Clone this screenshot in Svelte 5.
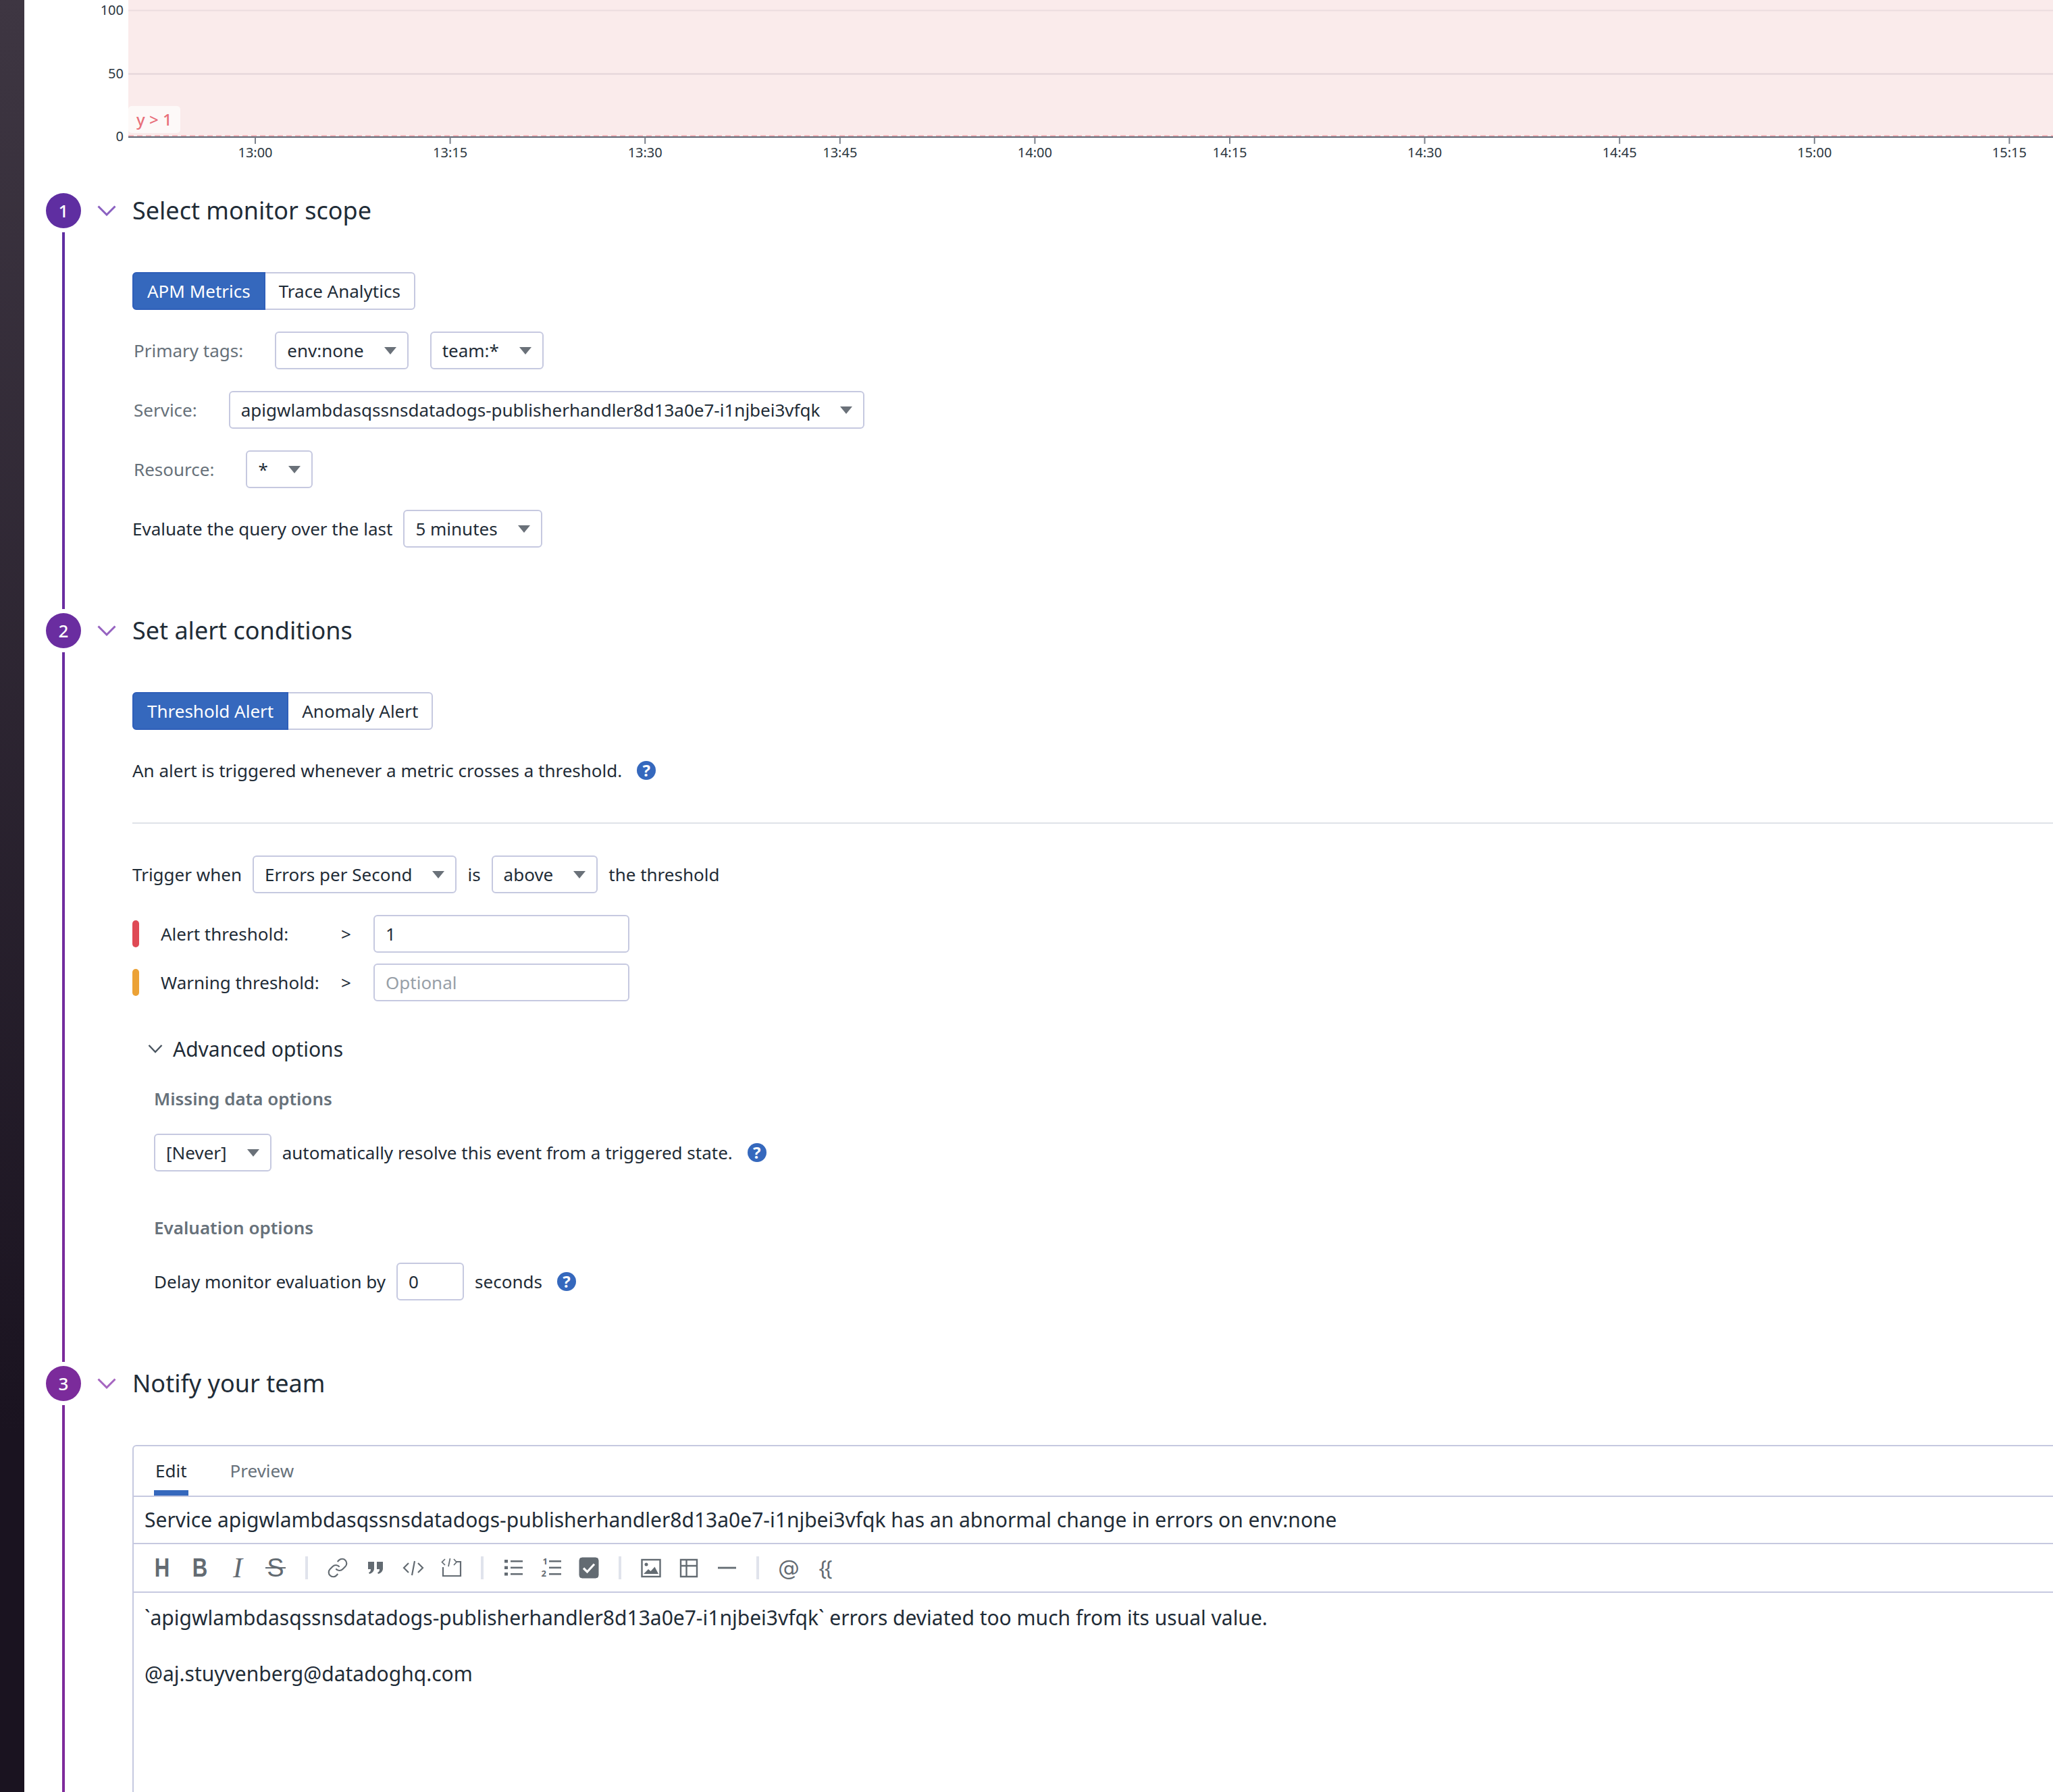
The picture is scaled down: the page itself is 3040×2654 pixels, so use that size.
<script lang="ts">
	const service = 'apigwlambdasqssnsdatadogs-publisherhandler8d13a0e7-i1njbei3vfqk';
	const ticks = ['13:00', '13:15', '13:30', '13:45', '14:00', '14:15', '14:30', '14:45', '15:00', '15:15'];
	const tickX = (i: number) => 342 + i * 288.6;
</script>

{#snippet select(label: string)}
	<div class="select">
		<span>{label}</span>
		<i class="caret"></i>
	</div>
{/snippet}

{#snippet help()}
	<span class="help">?</span>
{/snippet}

{#snippet stepHead(title: string)}
	<header class="step-head">
		<svg class="chevron" width="28" height="16" viewBox="0 0 28 16">
			<path d="M1.5 1.5 14 14 26.5 1.5" fill="none" stroke-width="3" />
		</svg>
		<h2>{title}</h2>
	</header>
{/snippet}

<div class="page">
	<aside class="nav-edge"></aside>

	<main class="content">
		<svg class="chart" width="3004" height="286">
			<rect x="154" y="0" width="2850" height="203" fill="#faebeb" />
			<line x1="154" x2="3004" y1="15.5" y2="15.5" stroke="#ebdcdf" stroke-width="2" />
			<line x1="154" x2="3004" y1="109.5" y2="109.5" stroke="#e2d3d8" stroke-width="2" />
			<line x1="154" x2="3004" y1="201" y2="201" stroke="#f3b7bd" stroke-width="2" stroke-dasharray="8 5" />
			<line x1="154" x2="3004" y1="203" y2="203" stroke="#5f6674" stroke-width="2" />
			<rect x="154" y="157" width="77" height="40" rx="5" fill="#fdf9f8" />
			<text class="marker" x="166" y="186">y &gt; 1</text>
			<text class="axis" x="147" y="22" text-anchor="end">100</text>
			<text class="axis" x="147" y="116" text-anchor="end">50</text>
			<text class="axis" x="147" y="209" text-anchor="end">0</text>
			{#each ticks as tick, i}
				<line x1={tickX(i)} x2={tickX(i)} y1="203" y2="213" stroke="#7b818c" stroke-width="2" />
				<text class="axis" x={tickX(i)} y="233" text-anchor="middle">{tick}</text>
			{/each}
		</svg>

		<section class="step step-1">
			<div class="rail">
				<span class="badge">1</span>
				<span class="line"></span>
			</div>
			<div class="step-body">
				{@render stepHead('Select monitor scope')}
				<div class="fields">
					<div class="toggle">
						<span class="toggle-item active">APM Metrics</span>
						<span class="toggle-item">Trace Analytics</span>
					</div>
					<div class="row">
						<span class="label">Primary tags:</span>
						{@render select('env:none')}
						{@render select('team:*')}
					</div>
					<div class="row">
						<span class="label">Service:</span>
						{@render select(service)}
					</div>
					<div class="row">
						<span class="label">Resource:</span>
						{@render select('*')}
					</div>
					<div class="row tight">
						<span>Evaluate the query over the last</span>
						{@render select('5 minutes')}
					</div>
				</div>
			</div>
		</section>

		<section class="step step-2">
			<div class="rail">
				<span class="badge">2</span>
				<span class="line"></span>
			</div>
			<div class="step-body">
				{@render stepHead('Set alert conditions')}
				<div class="fields">
					<div class="toggle">
						<span class="toggle-item active">Threshold Alert</span>
						<span class="toggle-item">Anomaly Alert</span>
					</div>
					<div class="row intro">
						<span>An alert is triggered whenever a metric crosses a threshold.</span>
						{@render help()}
					</div>
					<hr />
					<div class="row tight trigger">
						<span>Trigger when</span>
						{@render select('Errors per Second')}
						<span>is</span>
						{@render select('above')}
						<span>the threshold</span>
					</div>
					<div class="threshold first">
						<i class="bar alert"></i>
						<span class="thr-label">Alert threshold:</span>
						<span class="thr-gt">&gt;</span>
						<input class="input" value="1" />
					</div>
					<div class="threshold">
						<i class="bar warn"></i>
						<span class="thr-label">Warning threshold:</span>
						<span class="thr-gt">&gt;</span>
						<input class="input" placeholder="Optional" />
					</div>

					<div class="advanced">
						<svg class="adv-chevron" width="22" height="14" viewBox="0 0 22 14">
							<path d="M1.5 2 11 12 20.5 2" fill="none" stroke="#4a5560" stroke-width="2.4" />
						</svg>
						<span>Advanced options</span>
					</div>
					<div class="adv-body">
						<h3>Missing data options</h3>
						<div class="row tight never">
							{@render select('[Never]')}
							<span>automatically resolve this event from a triggered state.</span>
							<span class="help-gap">{@render help()}</span>
						</div>
						<h3 class="eval">Evaluation options</h3>
						<div class="row tight delay">
							<span>Delay monitor evaluation by</span>
							<input class="input small" value="0" />
							<span>seconds</span>
							<span class="help-gap">{@render help()}</span>
						</div>
					</div>
				</div>
			</div>
		</section>

		<section class="step step-3">
			<div class="rail">
				<span class="badge">3</span>
				<span class="line"></span>
			</div>
			<div class="step-body">
				{@render stepHead('Notify your team')}
				<div class="fields">
					<div class="editor">
						<div class="tabs">
							<span class="tab active">Edit</span>
							<span class="tab">Preview</span>
						</div>
						<div class="title-line">Service {service} has an abnormal change in errors on env:none</div>
						<div class="toolbar">
							<span class="tool letter heading">H</span>
							<span class="tool letter bold">B</span>
							<span class="tool letter italic">I</span>
							<span class="tool letter strike">S</span>
							<i class="sep"></i>
							<span class="tool">
								<svg width="32" height="32" viewBox="0 0 24 24" fill="none" stroke-width="1.6">
									<path d="M10 13a5 5 0 0 0 7.54.54l3-3a5 5 0 0 0-7.07-7.07l-1.72 1.71" />
									<path d="M14 11a5 5 0 0 0-7.54-.54l-3 3a5 5 0 0 0 7.07 7.07l1.71-1.71" />
								</svg>
							</span>
							<span class="tool">
								<svg width="32" height="32" viewBox="0 0 32 32" class="solid">
									<path d="M5 7h9v10c0 4-3 7-7 8l-1-2c2-1 3-2 3-5H5z" />
									<path d="M18 7h9v10c0 4-3 7-7 8l-1-2c2-1 3-2 3-5h-4z" />
								</svg>
							</span>
							<span class="tool">
								<svg width="32" height="32" viewBox="0 0 32 32" fill="none" stroke-width="2.2">
									<path d="M9 9 2 16l7 7M23 9l7 7-7 7M18 6l-4 21" />
								</svg>
							</span>
							<span class="tool">
								<svg width="32" height="32" viewBox="0 0 32 32" fill="none">
									<path d="M4 15v13h26V7h-6" stroke-width="2.2" />
									<path d="M7 3 2.5 7.5 7 12M20 3l4 4.5-4 4.5M14.5 2 12 14" stroke-width="1.7" />
								</svg>
							</span>
							<i class="sep"></i>
							<span class="tool">
								<svg width="32" height="32" viewBox="0 0 32 32" class="solid">
									<path d="M3 4h5v4.5H3zM3 13.5h5V18H3zM3 23h5v4.5H3zM12 5h18v2.500H12zM12 14.500h18V17H12zM12 24h18v2.500H12z" />
								</svg>
							</span>
							<span class="tool">
								<svg width="32" height="48" viewBox="0 -8 32 48" class="solid">
									<path d="M13 5h18v2.500H13zM13 14.500h18V17H13zM13 24h18v2.500H13z" />
									<text class="tool-digit" x="3.5" y="11">1</text>
									<text class="tool-digit" x="1.5" y="29">2</text>
								</svg>
							</span>
							<span class="tool">
								<svg width="32" height="32" viewBox="0 0 32 32">
									<rect x="2" y="1" width="28" height="30" rx="4" fill="#636b72" />
									<path d="M8 16.5l5.500 5.500L24 10.500" fill="none" stroke="#fff" stroke-width="3.2" />
								</svg>
							</span>
							<i class="sep"></i>
							<span class="tool">
								<svg width="32" height="32" viewBox="0 0 32 32" fill="none" stroke-width="2.4">
									<rect x="2.5" y="4" width="27" height="25" />
									<circle class="solid-shape" cx="9" cy="11" r="2.5" />
									<path class="solid-shape" d="M5 25l7-7 3.500 3 6-6.500L27 25z" />
								</svg>
							</span>
							<span class="tool">
								<svg width="32" height="32" viewBox="0 0 32 32" fill="none" stroke-width="2.4">
									<path d="M4 4h24v25H4zM12.500 4v25M4 13h24" />
								</svg>
							</span>
							<span class="tool">
								<svg width="32" height="32" viewBox="0 0 32 32" fill="none" stroke-width="2.8">
									<path d="M3 16h27" />
								</svg>
							</span>
							<i class="sep"></i>
							<span class="tool letter at">@</span>
							<span class="tool letter braces">{'{{'}</span>
						</div>
						<div class="message">
							<p>`{service}` errors deviated too much from its usual value.</p>
							<p class="mention">@aj.stuyvenberg@datadoghq.com</p>
						</div>
					</div>
				</div>
			</div>
		</section>
	</main>
</div>

<style>
	:global(body) {
		background: #fff;
		overflow: hidden;
	}

	.page {
		display: flex;
		width: 3040px;
		height: 2654px;
		overflow: hidden;
		font-family: 'Noto Sans', 'Open Sans', sans-serif;
		font-size: 26px;
		color: #1f2c37;
		background: #fff;
	}

	.nav-edge {
		flex: 0 0 36px;
		background: linear-gradient(#3e3642, #1a1320 80%);
	}

	.content {
		flex: 1;
		min-width: 0;
	}

	.chart {
		display: block;
	}

	.axis {
		font-size: 20px;
		fill: #2b3640;
	}

	.marker {
		font-size: 24px;
		font-weight: 500;
		fill: #e86f7a;
	}

	.step {
		display: flex;
		padding-left: 32px;
	}

	.step-1 {
		--accent: #5f2ea1;
		--accent-end: #6a2da0;
		--soft: #8a60c0;
	}

	.step-2 {
		--accent: #6a2da0;
		--accent-end: #7b2b9b;
		--soft: #9562c0;
	}

	.step-3 {
		--accent: #7b2b9b;
		--accent-end: #7f2a9b;
		--soft: #a565c0;
	}

	.rail {
		flex: 0 0 52px;
		display: flex;
		flex-direction: column;
		align-items: center;
	}

	.badge {
		flex: 0 0 52px;
		width: 52px;
		border-radius: 50%;
		background: var(--accent);
		color: #fff;
		font-size: 26px;
		font-weight: 500;
		line-height: 52px;
		text-align: center;
	}

	.line {
		flex: 1;
		width: 4px;
		margin: 6px 0;
		background: linear-gradient(var(--accent), var(--accent-end));
	}

	.step-body {
		flex: 1;
		min-width: 0;
		padding-left: 24px;
	}

	.step-head {
		display: flex;
		align-items: center;
		gap: 24px;
		height: 52px;
	}

	.chevron {
		flex: none;
		stroke: var(--soft);
	}

	h2 {
		margin: -2px 0 0;
		font-size: 36px;
		font-weight: 400;
	}

	.fields {
		padding-left: 52px;
	}

	.step-1 .fields {
		padding-top: 65px;
		padding-bottom: 97px;
	}

	.step-2 .fields {
		padding-top: 65px;
		padding-bottom: 97px;
	}

	.step-3 .fields {
		padding-top: 65px;
	}

	.toggle {
		display: inline-flex;
		height: 56px;
		border: 2px solid #c6c9e0;
		border-radius: 6px;
		box-sizing: border-box;
		vertical-align: top;
	}

	.toggle-item {
		display: flex;
		align-items: center;
		padding: 0 20px;
	}

	.toggle-item.active {
		margin: -2px 0 -2px -2px;
		padding: 0 20px;
		border: 2px solid #2f5fb9;
		border-radius: 6px 0 0 6px;
		background: #3568bd;
		color: #fff;
	}

	.row {
		display: flex;
		align-items: center;
		min-height: 56px;
		margin-top: 32px;
		gap: 32px;
		padding-left: 2px;
	}

	.row.tight {
		gap: 16px;
		padding-left: 0;
	}

	.label {
		margin-right: 15px;
		color: #67717a;
	}

	.select {
		display: flex;
		flex: none;
		align-items: center;
		gap: 30px;
		box-sizing: border-box;
		height: 56px;
		padding: 0 16px;
		border: 2px solid #c6c9e0;
		border-radius: 6px;
		background: #fff;
	}

	.caret {
		width: 0;
		height: 0;
		border-top: 11px solid #6a7179;
		border-left: 9px solid transparent;
		border-right: 9px solid transparent;
	}

	.help {
		display: inline-block;
		width: 28px;
		height: 28px;
		border-radius: 50%;
		background: #3568bd;
		color: #fff;
		font-size: 24px;
		font-weight: 700;
		line-height: 28px;
		text-align: center;
	}

	.help-gap {
		display: flex;
		margin-left: 6px;
	}

	.intro {
		gap: 22px;
		padding-left: 0;
		margin-top: 32px;
	}

	hr {
		height: 2px;
		margin: 49px 0 0;
		border: 0;
		background: #dfe2e8;
	}

	.trigger {
		margin-top: 47px;
	}

	.threshold {
		display: flex;
		align-items: center;
		margin-top: 16px;
	}

	.threshold.first {
		margin-top: 32px;
	}

	.bar {
		flex: none;
		width: 10px;
		height: 40px;
		margin-right: 32px;
		border-radius: 5px;
	}

	.bar.alert {
		background: #df4a55;
	}

	.bar.warn {
		background: #eca236;
	}

	.thr-label {
		width: 267px;
	}

	.thr-gt {
		width: 48px;
	}

	.input {
		box-sizing: border-box;
		width: 379px;
		height: 56px;
		padding: 0 16px;
		border: 2px solid #c6c9e0;
		border-radius: 6px;
		color: #1f2c37;
		font: inherit;
		outline: 0;
	}

	.input::placeholder {
		color: #98a0a8;
		opacity: 1;
	}

	.input.small {
		width: 100px;
	}

	.advanced {
		display: flex;
		align-items: center;
		gap: 15px;
		height: 44px;
		margin-top: 48px;
		margin-left: 23px;
		font-size: 30px;
	}

	.adv-body {
		padding-left: 32px;
	}

	h3 {
		margin: 34px 0 0;
		color: #67717a;
		font-size: 26px;
		font-weight: 600;
		line-height: 36px;
	}

	.never {
		margin-top: 34px;
	}

	h3.eval {
		margin-top: 65px;
	}

	.delay {
		margin-top: 34px;
	}

	.editor {
		height: 700px;
		margin-right: -10px;
		border: 2px solid #c6c9e0;
		border-radius: 6px 0 0 0;
	}

	.tabs {
		display: flex;
		align-items: flex-end;
		gap: 60px;
		height: 73px;
		padding-left: 30px;
		border-bottom: 2px solid #c6c9e0;
	}

	.tab {
		height: 66px;
		padding: 0 2px;
		box-sizing: border-box;
		color: #67717a;
		font-size: 26px;
		line-height: 58px;
	}

	.tab.active {
		border-bottom: 8px solid #3568bd;
		color: #1f2c37;
	}

	.title-line {
		height: 68px;
		padding-left: 16px;
		border-bottom: 2px solid #c6c9e0;
		font-size: 30px;
		line-height: 68px;
	}

	.toolbar {
		display: flex;
		align-items: center;
		height: 70px;
		padding-left: 14px;
		border-bottom: 2px solid #c6c9e0;
	}

	.tool {
		display: flex;
		flex: 0 0 56px;
		align-items: center;
		justify-content: center;
		color: #636b72;
		stroke: #636b72;
	}

	.solid {
		fill: #636b72;
		stroke: none;
	}

	.solid-shape {
		fill: #636b72;
		stroke: none;
	}

	.tool-digit {
		font-size: 13px;
		font-weight: 700;
		fill: #636b72;
	}

	.letter {
		position: relative;
		height: 48px;
		stroke: none;
		line-height: 48px;
	}

	.heading,
	.bold {
		font-family: 'Liberation Sans', sans-serif;
		font-size: 38px;
		font-weight: 700;
		transform: scaleX(0.82);
	}

	.italic {
		font-family: 'Liberation Serif', serif;
		font-size: 42px;
		font-style: italic;
	}

	.strike {
		font-family: 'Liberation Sans', sans-serif;
		font-size: 38px;
	}

	.strike::after {
		content: '';
		position: absolute;
		left: 13px;
		right: 13px;
		top: 23px;
		height: 2px;
		background: #636b72;
	}

	.at {
		font-family: 'DejaVu Sans', sans-serif;
		font-size: 32px;
	}

	.braces {
		box-sizing: border-box;
		padding-right: 6px;
		font-family: 'Noto Sans', sans-serif;
		font-size: 30px;
		letter-spacing: -3px;
	}

	.sep {
		flex: none;
		width: 4px;
		height: 34px;
		margin: 0 16px;
		background: #e0e3ec;
	}

	.message {
		padding: 16px 16px 0;
		font-size: 30px;
		line-height: 41px;
	}

	.message p {
		margin: 0;
	}

	.message .mention {
		margin-top: 42px;
	}
</style>
